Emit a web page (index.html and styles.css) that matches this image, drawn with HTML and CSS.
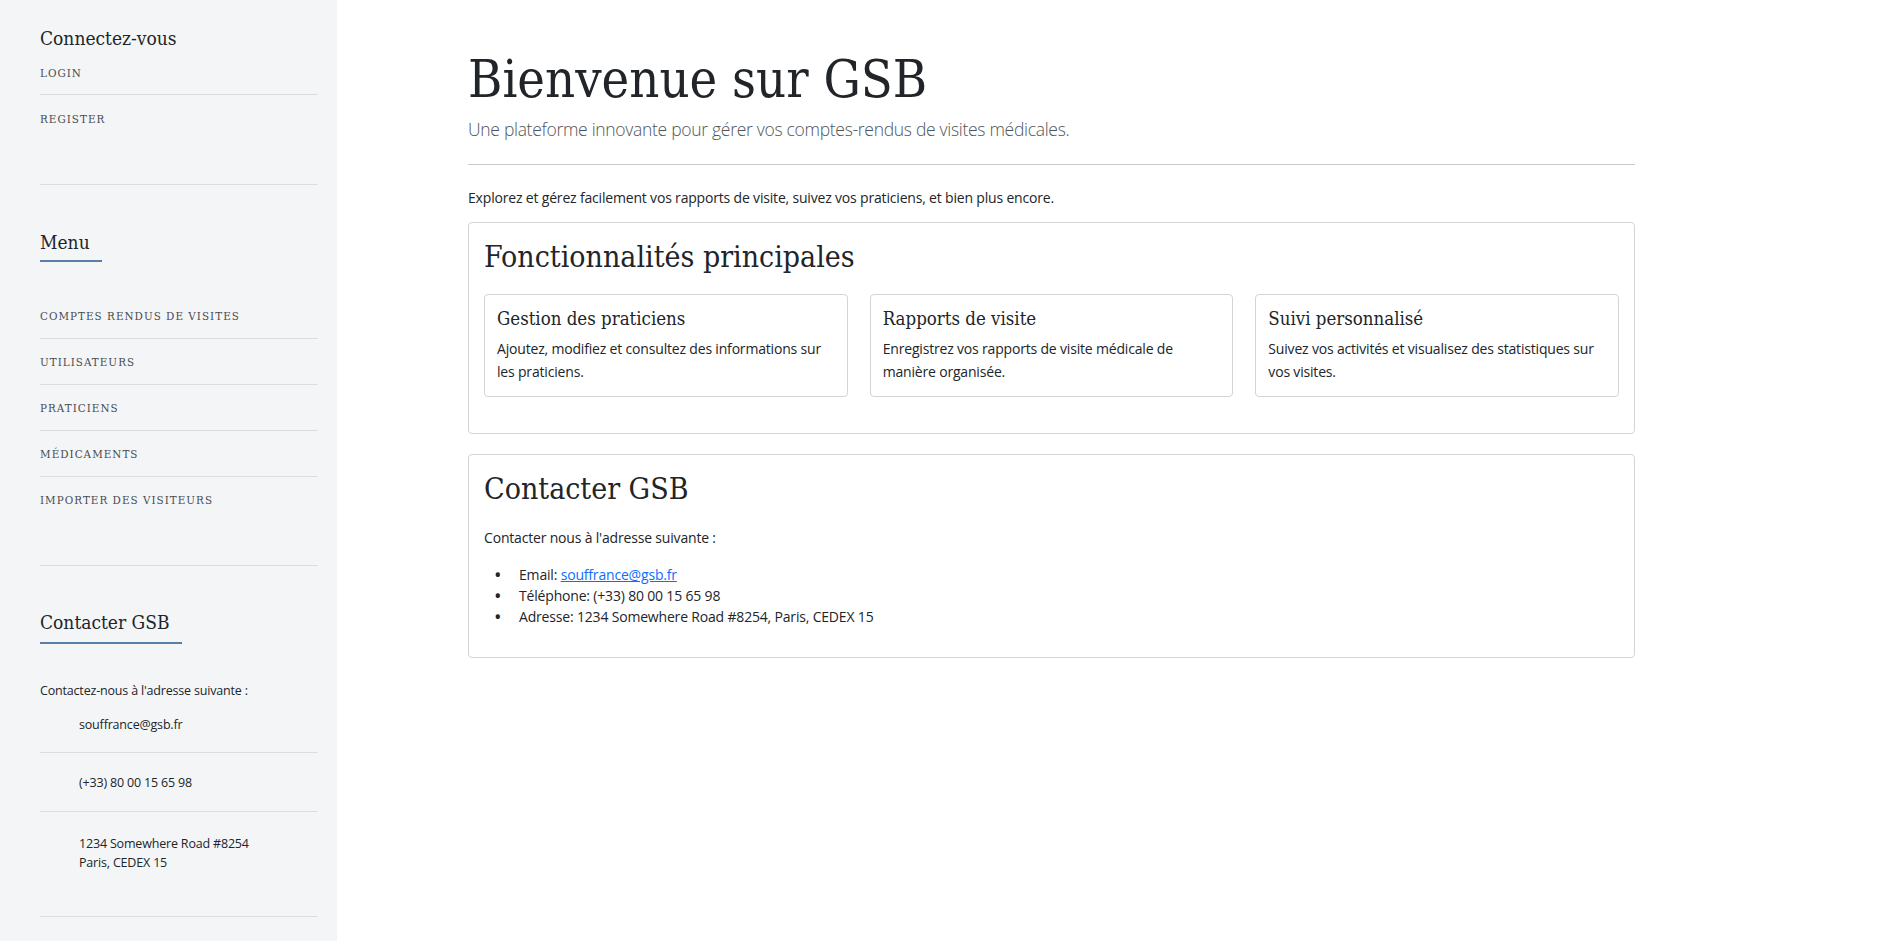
FILE: index.html
```html
<!DOCTYPE html>
<html lang="fr">
<head>
<meta charset="utf-8">
<title>GSB - Accueil</title>
<link rel="stylesheet" href="styles.css">
</head>
<body>
<div class="layout">
  <aside class="sidebar">
    <section class="side-section">
      <h2 class="side-heading">Connectez-vous</h2>
      <ul class="side-nav login-nav">
        <li><a href="#">Login</a></li>
        <li><a href="#">Register</a></li>
      </ul>
    </section>
    <section class="side-section menu-section">
      <h2 class="side-heading underlined">Menu</h2>
      <ul class="side-nav menu-nav">
        <li><a href="#">Comptes rendus de visites</a></li>
        <li><a href="#">Utilisateurs</a></li>
        <li><a href="#">Praticiens</a></li>
        <li><a href="#">Médicaments</a></li>
        <li><a href="#">Importer des visiteurs</a></li>
      </ul>
    </section>
    <section class="side-section contact-section">
      <h2 class="side-heading underlined">Contacter GSB</h2>
      <p class="side-text">Contactez-nous à l'adresse suivante :</p>
      <ul class="contact-list">
        <li>souffrance@gsb.fr</li>
        <li>(+33) 80 00 15 65 98</li>
        <li class="address">1234 Somewhere Road #8254<br>Paris, CEDEX 15</li>
      </ul>
    </section>
  </aside>
  <main class="main">
    <div class="container">
      <h1 class="display">Bienvenue sur GSB</h1>
      <p class="lead">Une plateforme innovante pour gérer vos comptes-rendus de visites médicales.</p>
      <hr class="divider">
      <p class="intro">Explorez et gérez facilement vos rapports de visite, suivez vos praticiens, et bien plus encore.</p>
      <section class="card features">
        <h2 class="card-heading">Fonctionnalités principales</h2>
        <div class="feature-grid">
          <div class="feature">
            <h3 class="feature-title">Gestion des praticiens</h3>
            <p class="feature-text">Ajoutez, modifiez et consultez des informations sur les praticiens.</p>
          </div>
          <div class="feature">
            <h3 class="feature-title">Rapports de visite</h3>
            <p class="feature-text">Enregistrez vos rapports de visite médicale de manière organisée.</p>
          </div>
          <div class="feature">
            <h3 class="feature-title">Suivi personnalisé</h3>
            <p class="feature-text">Suivez vos activités et visualisez des statistiques sur vos visites.</p>
          </div>
        </div>
      </section>
      <section class="card contact-card">
        <h2 class="card-heading">Contacter GSB</h2>
        <p class="contact-intro">Contacter nous à l'adresse suivante :</p>
        <ul class="contact-bullets">
          <li>Email:&nbsp;<a href="#" class="mail">souffrance@gsb.fr</a></li>
          <li>Téléphone: (+33) 80 00 15 65 98</li>
          <li>Adresse: 1234 Somewhere Road #8254, Paris, CEDEX 15</li>
        </ul>
      </section>
    </div>
  </main>
</div>
</body>
</html>
```
FILE: styles.css
```css
* { box-sizing: border-box; }
html, body { margin: 0; padding: 0; }
body {
  font-family: "Segoe UI", "Open Sans", "Noto Sans", sans-serif;
  font-size: 14px;
  letter-spacing: -0.18px;
  color: #212529;
  background: #fff;
}
.side-heading,
.side-nav a,
.display,
.card-heading,
.feature-title {
  font-family: "Roboto Slab", "DejaVu Serif", serif;
  font-stretch: condensed;
  letter-spacing: 0;
}
.layout {
  display: flex;
  min-height: 941px;
}
.sidebar {
  width: 337px;
  flex: 0 0 337px;
  background: #f4f5f7;
  padding: 26px 19px 0 40px;
}
.side-section {
  border-bottom: 1px solid #dcdde0;
  padding-bottom: 43px;
  margin-bottom: 45px;
}
.menu-section { margin-bottom: 44px; }
.side-heading {
  font-weight: 400;
  font-size: 19px;
  line-height: 24px;
  margin: 0;
  color: #212529;
  display: inline-block;
}
.side-heading.underlined {
  padding-right: 12px;
  padding-bottom: 6px;
  border-bottom: 2px solid #5b7ea8;
}
.contact-section .side-heading.underlined { padding-bottom: 8px; }
.side-nav {
  list-style: none;
  margin: 0;
  padding: 0;
}
.side-nav li {
  border-bottom: 1px solid #dcdde0;
  padding: 13px 0 12px;
}
.side-nav li:last-child { border-bottom: none; }
.login-nav li:first-child { padding-top: 13px; padding-bottom: 11px; }
.login-nav li:last-child { padding-top: 14px; }
.menu-nav li:first-child { padding-top: 44px; }
.menu-nav li:last-child { padding-bottom: 12px; }
.side-nav a {
  font-size: 11.5px;
  line-height: 20px;
  letter-spacing: 0.09em;
  text-transform: uppercase;
  color: #474c52;
  text-decoration: none;
  display: block;
}
.contact-section { margin-bottom: 0; padding-bottom: 0; }
.side-text {
  font-size: 12.5px;
  line-height: 19px;
  margin: 37px 0 0;
}
.contact-list {
  list-style: none;
  margin: 0;
  padding: 0;
  font-size: 12.5px;
  line-height: 19px;
}
.contact-list li {
  padding: 20px 0 19px 39px;
  border-bottom: 1px solid #dcdde0;
}
.contact-list li:first-child { padding-top: 15px; padding-bottom: 18px; }
.contact-list li.address { padding-top: 22px; padding-bottom: 44px; }
.contact-list li:last-child { border-bottom: none; }

.main {
  flex: 1;
  padding: 0 0 0 131px;
}
.container {
  width: 1167px;
  padding-top: 46px;
}
.display {
  font-weight: 400;
  font-size: 52px;
  line-height: 66px;
  margin: 0;
  color: #212529;
}
.lead {
  font-weight: 300;
  font-size: 17.5px;
  letter-spacing: -0.3px;
  line-height: 26px;
  color: #4f555b;
  margin: 4px 0 0;
}
.divider {
  border: 0;
  border-top: 1px solid #c8c8c8;
  margin: 22px 0 0;
}
.intro {
  margin: 23px 0 0;
  line-height: 20px;
}
.card {
  border: 1px solid #d2d4d6;
  border-radius: 4px;
  background: #fff;
  padding: 0 15px;
}
.features {
  margin-top: 14px;
  padding-bottom: 36px;
}
.card-heading {
  font-weight: 400;
  font-size: 30px;
  line-height: 36px;
  margin: 0;
  padding-top: 16px;
}
.feature-grid {
  display: grid;
  grid-template-columns: repeat(3, 1fr);
  gap: 22px;
  margin-top: 19px;
}
.feature {
  border: 1px solid #d2d4d6;
  border-radius: 4px;
  padding: 12px 12px 13px;
}
.feature-title {
  font-weight: 400;
  font-size: 18.5px;
  line-height: 24px;
  margin: 0;
}
.feature-text {
  margin: 6px 0 0;
  line-height: 23px;
}
.contact-card {
  margin-top: 20px;
  padding-bottom: 30px;
}
.contact-intro {
  margin: 21px 0 0;
  line-height: 20px;
}
.contact-bullets {
  list-style: none;
  margin: 16px 0 0;
  padding-left: 10px;
  line-height: 21px;
}
.contact-bullets li {
  display: flex;
}
.contact-bullets li::before {
  content: "\2022";
  flex: 0 0 25px;
  font-size: 20px;
  line-height: 21px;
}
.mail { color: #0d6efd; }
```
